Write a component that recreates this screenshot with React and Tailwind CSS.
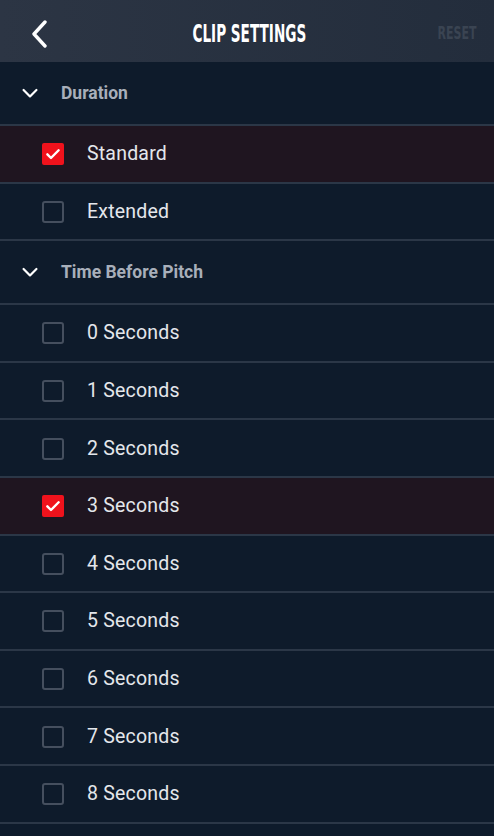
import React from 'react';

const durationOptions = [
  { label: 'Standard', checked: true },
  { label: 'Extended', checked: false },
];

const pitchOptions = [0, 1, 2, 3, 4, 5, 6, 7, 8].map((n) => ({
  label: `${n} Seconds`,
  checked: n === 3,
}));

const condensed = { fontFamily: '"Liberation Sans Narrow", "DejaVu Sans Condensed", sans-serif' };

const Checkbox = ({ checked }) =>
  checked ? (
    <div className="w-[22px] h-[22px] rounded-[2px] bg-[#f0121c] flex items-center justify-center">
      <svg viewBox="0 0 24 24" className="w-[18px] h-[18px]" fill="none" stroke="white" strokeWidth={3.2} strokeLinecap="round" strokeLinejoin="round">
        <path d="M4.5 12.5l4.8 4.8L19.5 7" />
      </svg>
    </div>
  ) : (
    <div className="w-[22px] h-[22px] rounded-[3px] border-2 border-[#454f5e]" />
  );

const OptionRow = ({ label, checked }) => (
  <div
    className={`h-[57.6px] flex items-center border-b-2 border-[#2b3747] ${
      checked ? 'bg-[#1f1520]' : 'bg-[#0e1b2b]'
    }`}
  >
    <div className="pl-[42px] w-[87px] shrink-0 pt-[1px]">
      <Checkbox checked={checked} />
    </div>
    <span className="text-[19.5px] text-[#e4e7ec] tracking-[0.2px]">{label}</span>
  </div>
);

const SectionHeader = ({ title }) => (
  <div className="h-[64px] flex items-center border-b-2 border-[#2b3747] bg-[#0e1b2b]">
    <div className="pl-[21px] w-[61px] shrink-0">
      <svg viewBox="0 0 20 14" className="w-[18px] h-[12px]" fill="none" stroke="white" strokeWidth={2.6} strokeLinecap="round" strokeLinejoin="round">
        <path d="M2.5 3.5l7.5 7.5 7.5-7.5" />
      </svg>
    </div>
    <span className="text-[17.5px] font-bold text-[#a8afba]">{title}</span>
  </div>
);

export default function App() {
  return (
    <div className="w-[494px] h-[836px] overflow-hidden bg-[#0e1b2b]" style={{ fontFamily: 'Roboto, "Liberation Sans", sans-serif' }}>
      <div className="h-[62px] grid grid-cols-[1fr_auto_1fr] items-center bg-gradient-to-r from-[#2c3544] to-[#232d3c] pl-[30px] pr-[16px] pt-[5px]">
        <svg viewBox="0 0 18 28" className="w-[18px] h-[28px]" fill="none" stroke="white" strokeWidth={3.4} strokeLinecap="round" strokeLinejoin="round">
          <path d="M15 2L4 14l11 12" />
        </svg>
        <span className="text-white text-[24px] font-bold inline-block scale-x-[0.63] translate-x-[-5px]" style={condensed}>
          CLIP SETTINGS
        </span>
        <span className="justify-self-end text-[#3a4452] text-[17px] font-bold inline-block scale-x-[0.72] translate-x-[6px]" style={condensed}>
          RESET
        </span>
      </div>
      <SectionHeader title="Duration" />
      {durationOptions.map((o) => (
        <OptionRow key={o.label} {...o} />
      ))}
      <SectionHeader title="Time Before Pitch" />
      {pitchOptions.map((o) => (
        <OptionRow key={o.label} {...o} />
      ))}
    </div>
  );
}
